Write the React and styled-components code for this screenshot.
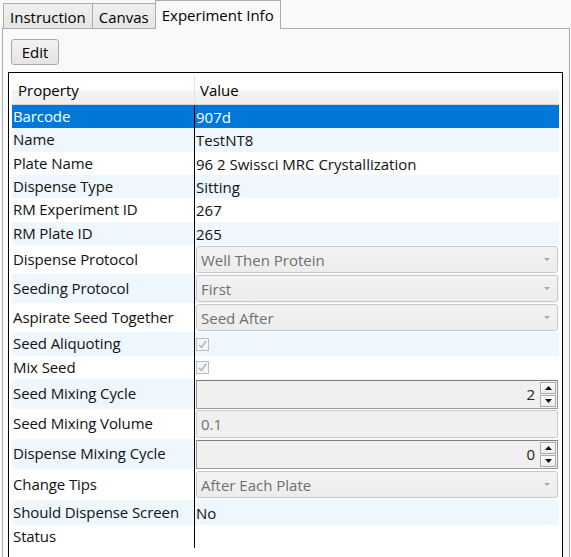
import styled, { createGlobalStyle } from "styled-components";

const GlobalStyle = createGlobalStyle`
  html, body {
    margin: 0;
    padding: 0;
    background: #f9f9f9;
    overflow: hidden;
    font-family: "Open Sans", "Noto Sans", sans-serif;
    font-size: 15px;
    color: #111;
  }
`;

const Window = styled.div`
  width: 571px;
  height: 557px;
  overflow: hidden;
`;

const TabStrip = styled.div`
  display: flex;
  align-items: flex-end;
  height: 28px;
  padding-left: 2px;
  position: relative;
  z-index: 1;
`;

const Tab = styled.div`
  height: ${(p) => (p.active ? "29px" : "25px")};
  margin-bottom: ${(p) => (p.active ? "-1px" : "0")};
  padding: 0 6px;
  display: flex;
  align-items: center;
  box-sizing: border-box;
  border: 1px solid #acacac;
  border-bottom: none;
  margin-left: ${(p) => (p.first ? "1px" : "-1px")};
  background: ${(p) =>
    p.active ? "#f9f9f9" : "linear-gradient(#f0f0f0, #e5e5e5)"};
  color: #000;
  padding-top: ${(p) => (p.active ? "0" : "1px")};
`;

const Panel = styled.div`
  margin: 0 1px 0 2px;
  border: 1px solid #acacac;
  height: 560px;
  box-sizing: border-box;
  padding: 10px 6px 0 5px;
  background: #f9f9f9;
`;

const EditButton = styled.button`
  display: block;
  margin-left: 3px;
  width: 48px;
  height: 26px;
  border: 1px solid #a8a8a8;
  border-radius: 3px;
  background: linear-gradient(#f3f3f3, #e4e4e4);
  font-family: inherit;
  font-size: 15px;
  color: #000;
  padding: 0;
`;

const Grid = styled.div`
  margin-top: 7px;
  border: 1px solid #000;
  background: #fff;
  padding: 3px;
  height: 520px;
  box-sizing: border-box;
`;

const HeaderRow = styled.div`
  display: flex;
  height: 29px;
  box-sizing: border-box;
  border-bottom: 1px solid #d5d5d5;
  background: linear-gradient(#ffffff 0%, #ffffff 45%, #f3f3f5 55%, #f0f0f2 100%);
`;

const HeaderCell = styled.div`
  width: ${(p) => p.w || "auto"};
  flex: ${(p) => (p.w ? "none" : "1")};
  display: flex;
  align-items: center;
  padding-left: ${(p) => p.pad};
  box-sizing: border-box;
  border-right: ${(p) => (p.w ? "1px solid #e2e2e2" : "none")};
  color: #000;
`;

const Row = styled.div`
  display: flex;
  height: ${(p) => p.h}px;
  background: ${(p) =>
    p.selected ? "#0078d7" : p.alt ? "#eff7fe" : "#ffffff"};
  color: ${(p) => (p.selected ? "#fff" : "#111")};
`;

const LabelCell = styled.div`
  width: 183px;
  flex: none;
  box-sizing: border-box;
  border-right: 1px solid #000;
  padding-left: 1px;
  padding-bottom: 2px;
  display: flex;
  align-items: center;
  white-space: nowrap;
  letter-spacing: -0.1px;
`;

const ValueCell = styled.div`
  flex: 1;
  display: flex;
  align-items: center;
  padding-left: 1px;
  white-space: nowrap;
`;

const Combo = styled.div`
  width: 362px;
  height: 27px;
  box-sizing: border-box;
  border: 1px solid #c8c8c8;
  border-radius: 3px;
  background: linear-gradient(#f3f3f3, #ececec);
  color: #6f6f6f;
  display: flex;
  align-items: center;
  justify-content: space-between;
  padding: 0 5px 0 4px;
`;

const Arrow = styled.span`
  width: 0;
  height: 0;
  border-left: 3px solid transparent;
  border-right: 3px solid transparent;
  border-top: 3px solid #a8a8a8;
  margin-right: 2px;
`;

const TextBox = styled.div`
  width: 362px;
  height: 28px;
  box-sizing: border-box;
  border: 1px solid #cccccc;
  border-radius: 2px;
  background: #f0f0f0;
  color: #6f6f6f;
  display: flex;
  align-items: center;
  padding-left: 4px;
`;

const Spinner = styled.div`
  width: 362px;
  height: 29px;
  box-sizing: border-box;
  border: 1px solid #9a9a9a;
  border-top-color: #7f7f7f;
  background: #f0f0f0;
  display: flex;
  align-items: center;
  justify-content: flex-end;
  color: #222;
`;

const SpinValue = styled.span`
  padding-right: 5px;
`;

const SpinButtons = styled.div`
  display: flex;
  flex-direction: column;
  gap: 1px;
  margin-right: 1px;
`;

const SpinButton = styled.div`
  width: 16px;
  height: 12px;
  box-sizing: border-box;
  border: 1px solid #acacac;
  background: linear-gradient(#fbfbfb, #ececec);
  display: flex;
  align-items: center;
  justify-content: center;
`;

const Check = styled.div`
  width: 13px;
  height: 13px;
  box-sizing: border-box;
  border: 1px solid #bcbcbc;
  background: #f4f4f4;
  display: flex;
  align-items: center;
  justify-content: center;
`;

const rows = [
  { label: "Barcode", h: 23, type: "text", value: "907d", selected: true },
  { label: "Name", h: 24, type: "text", value: "TestNT8" },
  { label: "Plate Name", h: 23, type: "text", value: "96 2 Swissci MRC Crystallization" },
  { label: "Dispense Type", h: 23, type: "text", value: "Sitting" },
  { label: "RM Experiment ID", h: 24, type: "text", value: "267" },
  { label: "RM Plate ID", h: 23, type: "text", value: "265" },
  { label: "Dispense Protocol", h: 29, type: "combo", value: "Well Then Protein" },
  { label: "Seeding Protocol", h: 29, type: "combo", value: "First" },
  { label: "Aspirate Seed Together", h: 29, type: "combo", value: "Seed After" },
  { label: "Seed Aliquoting", h: 24, type: "check" },
  { label: "Mix Seed", h: 23, type: "check" },
  { label: "Seed Mixing Cycle", h: 30, type: "spin", value: "2" },
  { label: "Seed Mixing Volume", h: 30, type: "input", value: "0.1" },
  { label: "Dispense Mixing Cycle", h: 30, type: "spin", value: "0" },
  { label: "Change Tips", h: 31, type: "combo", value: "After Each Plate" },
  { label: "Should Dispense Screen", h: 25, type: "text", value: "No" },
  { label: "Status", h: 23, type: "text", value: "" },
];

const TriUp = () => (
  <svg width="7" height="4" viewBox="0 0 7 4">
    <path d="M0 4 L3.5 0 L7 4 Z" fill="#111" />
  </svg>
);

const TriDown = () => (
  <svg width="7" height="4" viewBox="0 0 7 4">
    <path d="M0 0 L3.5 4 L7 0 Z" fill="#111" />
  </svg>
);

const CheckMark = () => (
  <svg width="9" height="9" viewBox="0 0 9 9">
    <path d="M1 5 L3.5 7.5 L8 1" fill="none" stroke="#9fb0d0" strokeWidth="1.4" />
  </svg>
);

const renderValue = (r) => {
  switch (r.type) {
    case "combo":
      return (
        <Combo>
          <span>{r.value}</span>
          <Arrow />
        </Combo>
      );
    case "check":
      return (
        <Check>
          <CheckMark />
        </Check>
      );
    case "spin":
      return (
        <Spinner>
          <SpinValue>{r.value}</SpinValue>
          <SpinButtons>
            <SpinButton>
              <TriUp />
            </SpinButton>
            <SpinButton>
              <TriDown />
            </SpinButton>
          </SpinButtons>
        </Spinner>
      );
    case "input":
      return <TextBox>{r.value}</TextBox>;
    default:
      return r.value;
  }
};

const App = () => {
  return (
    <Window>
      <GlobalStyle />
      <TabStrip>
        <Tab first>Instruction</Tab>
        <Tab>Canvas</Tab>
        <Tab active>Experiment Info</Tab>
      </TabStrip>
      <Panel>
        <EditButton>Edit</EditButton>
        <Grid>
          <HeaderRow>
            <HeaderCell w="183px" pad="6px">Property</HeaderCell>
            <HeaderCell pad="5px">Value</HeaderCell>
          </HeaderRow>
          {rows.map((r, i) => (
            <Row key={r.label} h={r.h} alt={i % 2 === 1} selected={r.selected}>
              <LabelCell>{r.label}</LabelCell>
              <ValueCell>{renderValue(r)}</ValueCell>
            </Row>
          ))}
        </Grid>
      </Panel>
    </Window>
  );
};

export default App;
